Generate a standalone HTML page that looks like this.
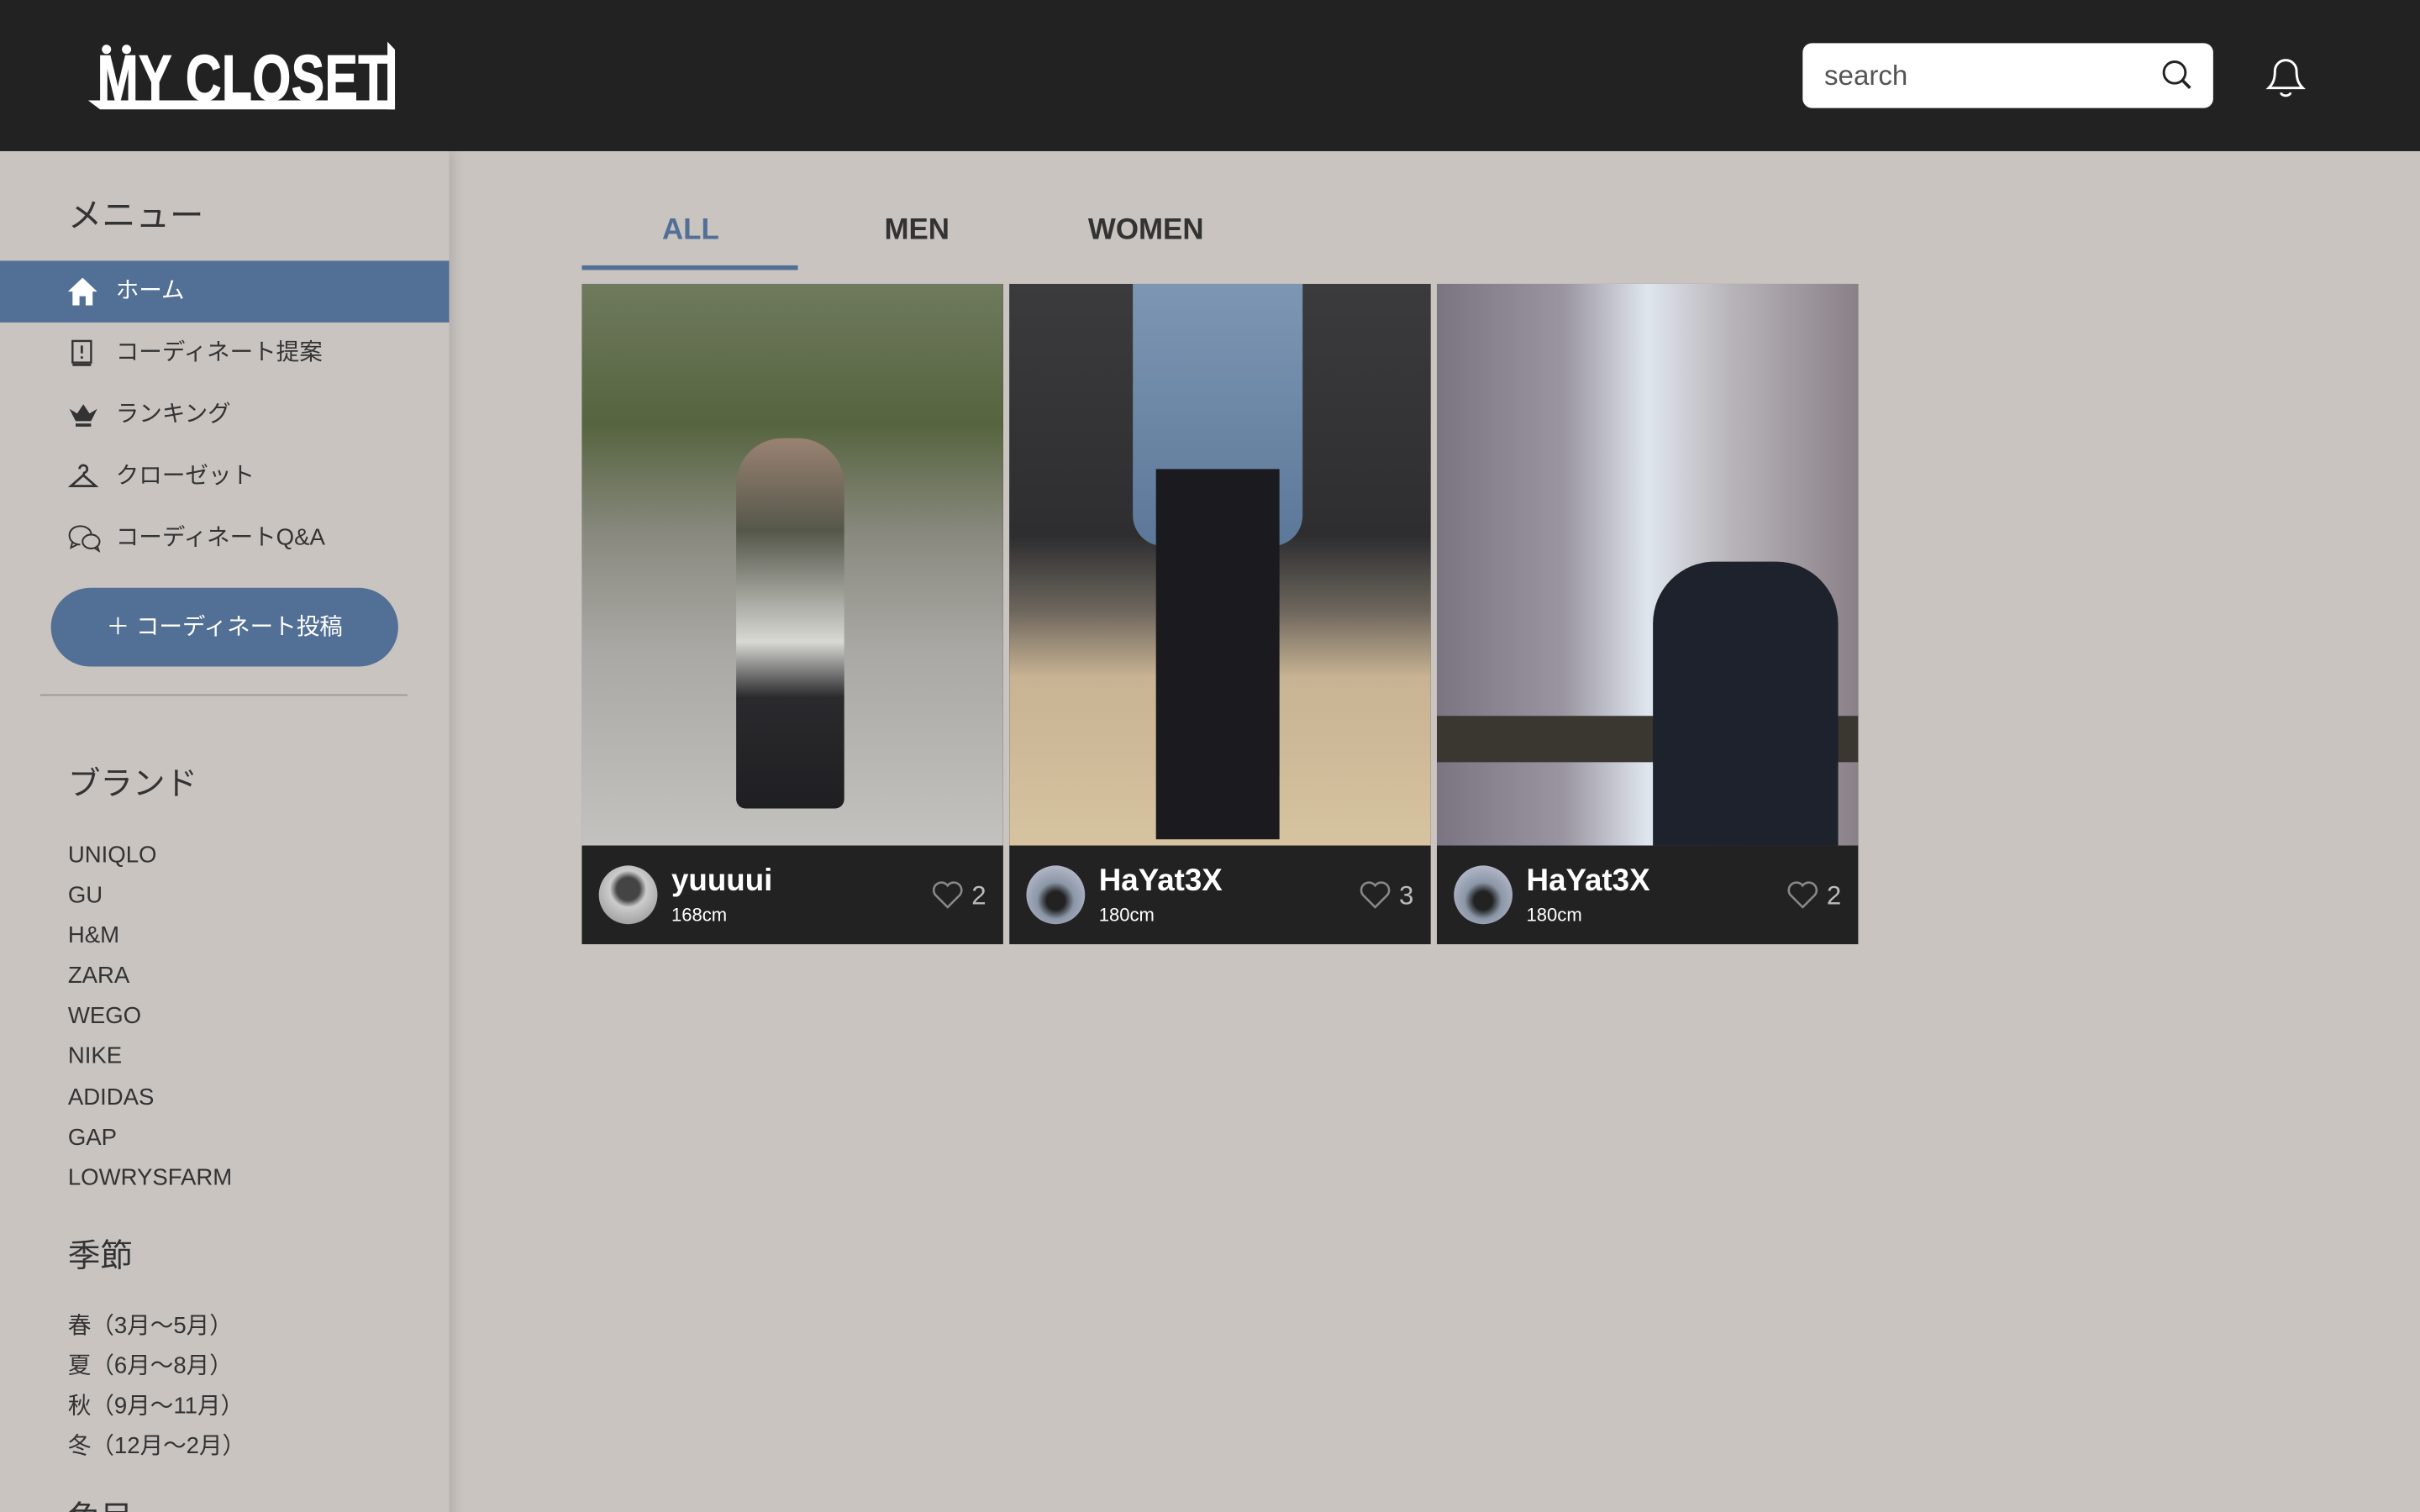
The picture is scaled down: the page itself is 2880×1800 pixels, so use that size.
<!DOCTYPE html>
<html><head><meta charset="utf-8"><style>
html,body{margin:0;padding:0;width:2880px;height:1800px;overflow:hidden;background:#c9c4c0}
#w{position:absolute;left:0;top:0;width:1568px;height:980px;transform:scale(1.83674);transform-origin:0 0;font-family:"Liberation Sans","Noto Sans CJK JP",sans-serif;color:#333;overflow:hidden}
.hdr{position:absolute;left:0;top:0;width:1568px;height:98px;background:#222;z-index:2}
.side{position:absolute;left:0;top:98px;width:291px;height:920px;background:#c9c4c0;box-shadow:3px 0 8px rgba(0,0,0,.12)}
.t{position:absolute;white-space:nowrap}
.mi{position:absolute;left:0;width:291px;height:40px;font-size:15px;line-height:40px}
.mi span{position:absolute;left:75px}
.mi svg{position:absolute;left:44px;top:11px}
.card{position:absolute;top:184px;width:273px;height:428px;background:#222;overflow:hidden}
.ph{position:absolute;left:0;top:0;width:273px;height:364px}
.av{position:absolute;left:11px;top:377px;width:38px;height:38px;border-radius:50%}
.nm{position:absolute;left:58px;top:376px;color:#fff;font-weight:bold;font-size:20px}
.ht{position:absolute;left:58px;top:402px;color:#fff;font-size:12px}
.lk{position:absolute;right:11px;top:387px;color:#bbb;font-size:17px}
.lk svg{vertical-align:-3px;margin-right:6px}
</style></head><body><div id="w">
<div class="hdr">
 <div class="t" style="left:63px;top:30px;color:#fff;font-weight:bold;font-size:42px;line-height:42px;letter-spacing:0.5px;transform:scaleX(0.76);transform-origin:0 0;-webkit-text-stroke:0.8px #fff">MY CLOSET</div>
 <div style="position:absolute;left:66px;top:29px;width:6px;height:6px;border-radius:50%;background:#fff"></div>
 <div style="position:absolute;left:79px;top:29px;width:6px;height:6px;border-radius:50%;background:#fff"></div>
 <div style="position:absolute;left:57px;top:65px;width:199px;height:6px;background:#fff;clip-path:polygon(0 0,100% 0,100% 100%,4% 100%)"></div>
 <div style="position:absolute;left:251px;top:27px;width:5px;height:44px;background:#fff;clip-path:polygon(0 0,100% 12%,100% 100%,0 100%)"></div>
 <div style="position:absolute;left:1168px;top:28px;width:266px;height:42px;background:#fff;border-radius:6px"></div>
 <div class="t" style="left:1182px;top:39px;font-size:18px;color:#555">search</div>
 <svg style="position:absolute;left:1400px;top:38px" width="22" height="22" viewBox="0 0 22 22"><circle cx="9" cy="9" r="7" fill="none" stroke="#222" stroke-width="1.6"/><path d="M14 14l5 5" stroke="#222" stroke-width="2"/></svg>
 <svg style="position:absolute;left:1464px;top:32px" width="34" height="34" viewBox="0 0 34 34"><path d="M6 25h22c-3-3-4-6-4-11a7 7 0 0 0-14 0c0 5-1 8-4 11z" fill="none" stroke="#fff" stroke-width="1.6"/><path d="M14 28a3 2 0 0 0 6 0" fill="none" stroke="#fff" stroke-width="1.6"/></svg>
</div>
<div class="side">
 <div class="t" style="left:44px;top:24px;font-size:22px">メニュー</div>
 <div class="mi" style="top:71px;background:#526f96;color:#fff"><svg width="19" height="18" viewBox="0 0 19 18"><path d="M9.5 0L0 9h3v9h4.5v-6h4v6H16V9h3z" fill="#fff"/></svg><span>ホーム</span></div>
 <div class="mi" style="top:111px"><svg width="18" height="18" viewBox="0 0 18 18"><rect x="3" y="1" width="12" height="14" fill="none" stroke="#333" stroke-width="1.3"/><path d="M3 16.5h12M9 4v5M9 11v1.5" stroke="#333" stroke-width="1.5"/></svg><span>コーディネート提案</span></div>
 <div class="mi" style="top:151px"><svg width="20" height="18" viewBox="0 0 20 18"><path d="M1 5l4 8h10l4-8-5 3-4-6-4 6z" fill="#333"/><rect x="5" y="14.5" width="10" height="2" fill="#333"/></svg><span>ランキング</span></div>
 <div class="mi" style="top:191px"><svg width="20" height="18" viewBox="0 0 20 18"><path d="M7.5 4a2.5 2.5 0 1 1 3 2.5L10 8 2 15h16L10 8" fill="none" stroke="#333" stroke-width="1.5"/></svg><span>クローゼット</span></div>
 <div class="mi" style="top:231px"><svg width="22" height="18" viewBox="0 0 22 18"><path d="M8 13c-4 0-7-2.5-7-6s3-6 7-6 7 2.5 7 5M3 11l-1 4 4-2" fill="none" stroke="#333" stroke-width="1.1"/><ellipse cx="15" cy="11" rx="5.5" ry="4.5" fill="none" stroke="#333" stroke-width="1.1"/><path d="M17 15l3 2-1-3" fill="none" stroke="#333" stroke-width="1.1"/></svg><span>コーディネートQ&amp;A</span></div>
 <div style="position:absolute;left:33px;top:283px;width:225px;height:51px;border-radius:26px;background:#526f96;color:#fff;font-size:15px;line-height:51px;text-align:center">＋ コーディネート投稿</div>
 <div style="position:absolute;left:26px;top:352px;width:238px;height:1px;background:#999"></div>
 <div class="t" style="left:44px;top:394px;font-size:21px">ブランド</div>
 <div class="t" style="left:44px;top:444px;font-size:15px;line-height:26.1px">UNIQLO<br>GU<br>H&amp;M<br>ZARA<br>WEGO<br>NIKE<br>ADIDAS<br>GAP<br>LOWRYSFARM</div>
 <div class="t" style="left:44px;top:700px;font-size:21px">季節</div>
 <div class="t" style="left:44px;top:749px;font-size:15px;line-height:26px">春（3月〜5月）<br>夏（6月〜8月）<br>秋（9月〜11月）<br>冬（12月〜2月）</div>
 <div class="t" style="left:44px;top:870px;font-size:21px">色目</div>
</div>
<div class="t" style="left:429px;top:139px;font-size:19px;font-weight:bold;color:#526f96">ALL</div>
<div style="position:absolute;left:377px;top:172px;width:140px;height:3px;background:#526f96"></div>
<div class="t" style="left:573px;top:139px;font-size:19px;font-weight:bold">MEN</div>
<div class="t" style="left:705px;top:139px;font-size:19px;font-weight:bold">WOMEN</div>

<div class="card" style="left:377px"><div class="ph" style="background:linear-gradient(180deg,#6f7a5e 0%,#56643f 25%,#8a8a80 45%,#a9a8a4 65%,#c3c2bf 100%)"></div>
<div style="position:absolute;left:100px;top:100px;width:70px;height:240px;background:linear-gradient(180deg,#9a8272 0%,#55574a 25%,#d8d8d4 55%,#2a2a2d 70%,#1f1f22 100%);border-radius:30px 30px 6px 6px"></div>
<div class="av" style="background:radial-gradient(circle at 50% 40%,#444 0 25%,#ccc 40%,#888)"></div><div class="nm">yuuuui</div><div class="ht">168cm</div><div class="lk"><svg width="20" height="18" viewBox="0 0 20 18"><path d="M10 17L2 9a4.5 4.5 0 0 1 8-6 4.5 4.5 0 0 1 8 6z" fill="none" stroke="#888" stroke-width="1.4"/></svg>2</div></div>

<div class="card" style="left:654px"><div class="ph" style="background:linear-gradient(180deg,#3b3b3d 0%,#2e2e30 45%,#6c655c 58%,#c8b392 70%,#d6c39f 100%)"></div>
<div style="position:absolute;left:80px;top:0;width:110px;height:170px;background:linear-gradient(180deg,#7d96b3,#5c7899);border-radius:0 0 20px 20px"></div>
<div style="position:absolute;left:95px;top:120px;width:80px;height:240px;background:#1b1b1f"></div>
<div class="av" style="background:radial-gradient(circle at 50% 60%,#222 0 20%,#8a96a6 40%,#ccd)"></div><div class="nm">HaYat3X</div><div class="ht">180cm</div><div class="lk"><svg width="20" height="18" viewBox="0 0 20 18"><path d="M10 17L2 9a4.5 4.5 0 0 1 8-6 4.5 4.5 0 0 1 8 6z" fill="none" stroke="#888" stroke-width="1.4"/></svg>3</div></div>

<div class="card" style="left:931px"><div class="ph" style="background:linear-gradient(90deg,#7a7580 0%,#9a95a0 30%,#dfe6ee 50%,#b7b4b8 70%,#8a8088 100%)"></div>
<div style="position:absolute;left:0;top:280px;width:273px;height:30px;background:#3a3630"></div>
<div style="position:absolute;left:140px;top:180px;width:120px;height:184px;background:#1e222c;border-radius:40px 40px 0 0"></div>
<div class="av" style="background:radial-gradient(circle at 50% 60%,#222 0 20%,#8a96a6 40%,#ccd)"></div><div class="nm">HaYat3X</div><div class="ht">180cm</div><div class="lk"><svg width="20" height="18" viewBox="0 0 20 18"><path d="M10 17L2 9a4.5 4.5 0 0 1 8-6 4.5 4.5 0 0 1 8 6z" fill="none" stroke="#888" stroke-width="1.4"/></svg>2</div></div>
</div></body></html>
